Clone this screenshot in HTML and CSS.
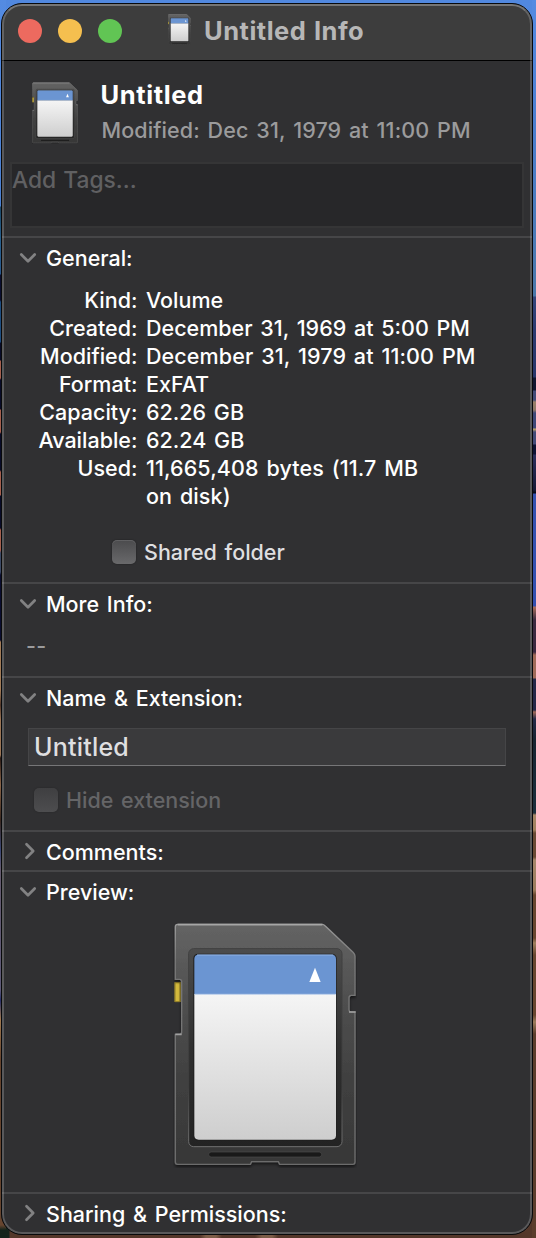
FILE: index.html
```html
<!DOCTYPE html>
<html lang="en">
<head>
<meta charset="utf-8">
<title>Untitled Info</title>
<link rel="stylesheet" href="styles.css">
</head>
<body>
<svg class="defs" width="0" height="0" aria-hidden="true">
  <defs>
    <linearGradient id="shell" x1="0" y1="0" x2="0" y2="1"><stop offset="0" stop-color="#646464"/><stop offset=".3" stop-color="#505050"/><stop offset=".65" stop-color="#404040"/><stop offset="1" stop-color="#373737"/></linearGradient>
    <linearGradient id="edge" x1="0" y1="0" x2="0" y2="1"><stop offset="0" stop-color="#999"/><stop offset=".15" stop-color="#777"/><stop offset="1" stop-color="#6c6c6c"/></linearGradient>
    <linearGradient id="well" x1="0" y1="0" x2="0" y2="1"><stop offset="0" stop-color="#4c4c4c"/><stop offset=".5" stop-color="#303030"/><stop offset="1" stop-color="#232323"/></linearGradient>
    <linearGradient id="wellEdge" x1="0" y1="0" x2="0" y2="1"><stop offset="0" stop-color="#3f3f3f"/><stop offset=".7" stop-color="#3f3f3f"/><stop offset="1" stop-color="#707070"/></linearGradient>
    <linearGradient id="paper" x1="0" y1="0" x2="0" y2="1"><stop offset="0" stop-color="#f5f5f5"/><stop offset="1" stop-color="#cecece"/></linearGradient>
    <filter id="drop" x="-5%" y="-5%" width="110%" height="110%"><feDropShadow dx="0" dy="6" stdDeviation="4" flood-color="#000" flood-opacity=".55"/></filter>
  </defs>
  <symbol id="card" viewBox="40 36 552 738">
    <rect x="45" y="216" width="18" height="60" fill="#d2b83c"/>
    <path d="M46 218H61V275H46Z" fill="none" stroke="#8c7a28" stroke-width="3"/>
    <path filter="url(#drop)" d="M54 43H488Q492 43 496 47L580 127Q586 133 586 139V256H575Q568 256 568 263V299Q568 306 575 306H586V756Q586 763 579 763H360L356 755H276L272 763H54Q47 763 47 756V373H60Q66 373 66 367V215Q66 208 60 208H47V50Q47 43 54 43Z" fill="url(#shell)" stroke="url(#edge)" stroke-width="4"/>
    <path d="M54 44H488" stroke="#a6a6a6" stroke-width="5"/>
    <path d="M47 373H66M568 306H588" stroke="#a0a0a0" stroke-width="5"/>
    <rect x="87" y="116" width="460" height="594" rx="15" fill="url(#well)" stroke="url(#wellEdge)" stroke-width="3"/>
    <rect x="101" y="131" width="430" height="561" rx="14" fill="#202020"/>
    <path d="M104 252H529V676Q529 689 516 689H117Q104 689 104 676Z" fill="url(#paper)"/>
    <path d="M104 252V147Q104 134 117 134H516Q529 134 529 147V252Z" fill="#6b95d2"/>
    <path d="M112 135H521" stroke="#92b4e4" stroke-width="3"/>
    <path d="M105 253H528" stroke="#b8cdea" stroke-width="3"/>
    <path d="M466 173L483 216H449Z" fill="#fff"/>
    <rect x="147" y="726" width="339" height="15" rx="7.5" fill="#191919" stroke="#4c4c4c" stroke-width="2"/>
  </symbol>
  <symbol id="open" viewBox="0 0 18 12"><path d="M2.300 2.500L9 9.200L15.700 2.500" fill="none" stroke="#828283" stroke-width="2.700" stroke-linecap="round" stroke-linejoin="round"/></symbol>
  <symbol id="closed" viewBox="0 0 12 18"><path d="M2.500 2.300L9.200 9L2.500 15.700" fill="none" stroke="#828283" stroke-width="2.700" stroke-linecap="round" stroke-linejoin="round"/></symbol>
</svg>

<main class="window">
  <header class="titlebar">
    <div class="lights"><i class="light close"></i><i class="light minimize"></i><i class="light zoom"></i></div>
    <svg class="proxy"><use href="#card"/></svg>
    <h1 class="title">Untitled Info</h1>
  </header>

  <div class="summary">
    <svg class="thumb"><use href="#card"/></svg>
    <div class="summary-text">
      <div class="name">Untitled</div>
      <div class="date">Modified: Dec 31, 1979 at 11:00 PM</div>
    </div>
  </div>
  <div class="tags">Add Tags...</div>

  <section class="section general">
    <h2 class="head"><svg class="open"><use href="#open"/></svg><span class="label">General:</span></h2>
    <dl class="facts">
      <dt>Kind:</dt><dd>Volume</dd>
      <dt>Created:</dt><dd>December 31, 1969 at 5:00 PM</dd>
      <dt>Modified:</dt><dd class="loose">December 31, 1979 at 11:00 PM</dd>
      <dt>Format:</dt><dd>ExFAT</dd>
      <dt>Capacity:</dt><dd>62.26 GB</dd>
      <dt>Available:</dt><dd>62.24 GB</dd>
      <dt>Used:</dt><dd class="loose">11,665,408 bytes (11.7 MB<br>on disk)</dd>
    </dl>
    <div class="check shared"><i class="box"></i><span>Shared folder</span></div>
  </section>

  <section class="section more">
    <h2 class="head"><svg class="open"><use href="#open"/></svg><span class="label">More Info:</span></h2>
    <div class="empty">--</div>
  </section>

  <section class="section naming">
    <h2 class="head"><svg class="open"><use href="#open"/></svg><span class="label">Name &amp; Extension:</span></h2>
    <div class="field">Untitled</div>
    <div class="check hide"><i class="box"></i><span>Hide extension</span></div>
  </section>

  <section class="section comments">
    <h2 class="head"><svg class="closed"><use href="#closed"/></svg><span class="label">Comments:</span></h2>
  </section>

  <section class="section preview">
    <h2 class="head"><svg class="open"><use href="#open"/></svg><span class="label">Preview:</span></h2>
    <svg class="picture"><use href="#card"/></svg>
  </section>

  <section class="section sharing">
    <h2 class="head"><svg class="closed"><use href="#closed"/></svg><span class="label">Sharing &amp; Permissions:</span></h2>
  </section>
</main>
</body>
</html>
```
FILE: styles.css
```css
* { box-sizing: border-box; }

body {
  margin: 0;
  height: 1238px;
  overflow: hidden;
  padding: 3px 3px 3px 1px;
  font-family: Inter, "Liberation Sans", sans-serif;
  font-size: 21.5px;
  font-weight: 500;
  word-spacing: 2px;
  color: #fff;
  background:
    linear-gradient(#548be2 0, #4c7fd0 120px, #4a78a8 296px, #34467c 297px, #2c3a70 330px, #28366a 377px, #10152f 378px, #10152f 390px, #434b78 391px, #434b78 400px, #9a8068 402px, #8d7768 410px, #3e4878 413px, #3e4878 428px, #c0a86a 429px, #434b78 432px, #434b78 444px, #0d1233 445px, #0d1233 454px, #2b2e5c 455px, #161936 490px, #05060f 493px, #3551b0 494px, #3350b0 606px, #a86e5c 607px, #3a2a40 620px, #3a2840 652px, #a06a58 655px, #a06a58 678px, #242848 679px, #242848 710px, #a06a58 712px, #242a48 719px, #172430 740px, #1b2f3c 813px, #a68868 815px, #a0805e 830px, #6a4a34 833px, #6a4a34 857px, #a5866a 860px, #9c7c5c 890px, #68462f 895px, #68462f 938px, #a0805e 943px, #68462f 955px, #68462f 1015px, #9c7c5c 1022px, #5b3d2c 1034px, #5b3d2c 1238px) right / 4px 100% no-repeat,
    linear-gradient(#548be2 0, #4a80d2 206px, #1d4968 207px, #27608f 240px, #28588c 274px, #0a0e30 275px, #0a0e30 300px, #1d4d80 302px, #1d4d80 342px, #080b28 343px, #080b28 360px, #a5604e 361px, #a5604e 378px, #080b28 380px, #080b28 409px, #a5604e 410px, #a5604e 432px, #080b28 434px, #080b28 470px, #a5604e 472px, #a5604e 495px, #080b28 496px, #080b28 528px, #a5604e 530px, #a5604e 550px, #3c4a66 553px, #3c4a66 572px, #0a0d30 575px, #0a0d30 640px, #a27c58 642px, #a27c58 690px, #54392b 705px, #9b7555 720px, #9b7555 755px, #2b1c18 758px, #8b6548 785px, #3b2920 820px, #3b4876 850px, #665c70 870px, #5e5a78 990px, #28306a 1000px, #a17a50 1020px, #67452f 1060px, #67452f 1225px, #14241c 1230px) left / 6px 100% no-repeat,
    linear-gradient(90deg, #14241c 0 9px, #54372a 10px 200px, #7d5d48 206px 216px, #54372a 222px 255px, #7d5d48 262px 272px, #54372a 278px) bottom / 100% 20px no-repeat,
    #5188df;
}

.defs { position: absolute; }

.window {
  position: relative;
  display: flex;
  flex-direction: column;
  width: 532px;
  height: 1232px;
  overflow: hidden;
  border: 1px solid #08090b;
  border-radius: 21px;
  background: #303032;
}

/* Light rim drawn over the window content */
.window::after {
  content: "";
  position: absolute;
  inset: 0;
  border: 2px solid rgba(255, 255, 255, .2);
  border-top-color: rgba(255, 255, 255, .29);
  border-radius: 20px;
  pointer-events: none;
}

.titlebar {
  display: flex;
  align-items: center;
  height: 57px;
  flex: none;
  padding: 0 0 2px 16px;
  border-bottom: 1px solid #000;
  background: #3d3d3d;
}

.lights { display: flex; gap: 16px; }
.light { width: 24px; height: 24px; border-radius: 50%; }
.close { background: #ed6a5f; }
.minimize { background: #f5bf4f; }
.zoom { background: #61c554; }

.proxy { width: 23px; height: 31px; margin: -3px 0 0 46px; flex: none; }

.title {
  margin: -1px 0 0 13px;
  font-size: 25.5px;
  font-weight: 700;
  line-height: 32px;
  letter-spacing: .5px;
  word-spacing: 1px;
  color: #b7b7b7;
  white-space: nowrap;
}

.summary { display: flex; height: 101px; flex: none; padding: 21px 0 0 30px; }
.thumb { width: 46px; height: 62px; flex: none; }
.summary-text { padding-left: 22.5px; white-space: nowrap; }
.name { font-size: 25.5px; font-weight: 700; line-height: 32px; margin-top: -3px; letter-spacing: .6px; }
.date { line-height: 28px; margin-top: 5px; padding-left: 1px; color: #9b9b9c; letter-spacing: .1px; }

.tags {
  height: 66px;
  flex: none;
  margin: 0 8px 8px 8px;
  border: 2px solid #353536;
  background: #272729;
  color: #606062;
  font-size: 22.8px;
  line-height: 32px;
  word-spacing: 1px;
}

.section { flex: none; border-top: 2px solid #464648; }
.general { height: 346px; }
.more { height: 94px; }
.naming { height: 154px; }
.comments { height: 40px; }
.preview { height: 322px; }
.sharing { height: 41px; }

.head {
  display: flex;
  align-items: center;
  height: 40px;
  margin: 0;
  padding-left: 17px;
  font-size: inherit;
  font-weight: 500;
  white-space: nowrap;
}
.open { width: 18px; height: 12px; margin-right: 9px; }
.closed { width: 12px; height: 18px; margin: -2px 10px 0 5px; }

.facts {
  display: grid;
  grid-template-columns: 135.5px 1fr;
  column-gap: 8.5px;
  margin: 8px 0 0;
  line-height: 28px;
}
.facts dt { text-align: right; }
.facts dd { margin: 0; }
.facts .loose { letter-spacing: .1px; }

.check { display: flex; align-items: center; gap: 8px; height: 28px; color: #dfdfe0; white-space: nowrap; }
.box {
  width: 24px;
  height: 24px;
  border-radius: 5px;
  background: linear-gradient(#4b4b4d, #69696b);
  box-shadow: 0 0 2px rgba(0, 0, 0, .4), inset 0 1px 0 rgba(255, 255, 255, .12);
}
.shared { margin: 28px 0 0 110px; }
.hide { margin: 20px 0 0 32px; color: #656567; }
.hide .box { background: linear-gradient(#3f3f41, #4d4d4f); box-shadow: 0 0 2px rgba(0, 0, 0, .25); }

.empty { margin: 8px 0 0 24px; line-height: 28px; color: #9b9b9c; letter-spacing: .4px; }

.field {
  width: 478px;
  height: 38px;
  margin: 10px 0 0 26px;
  padding-left: 5px;
  border: 1px solid #454547;
  border-bottom-color: #767678;
  background: #3a3a3c;
  color: #dfdfe0;
  font-size: 25px;
  line-height: 36px;
  letter-spacing: .2px;
}

.picture { display: block; width: 184px; height: 246px; margin: 10px 0 0 171.3px; }
```
